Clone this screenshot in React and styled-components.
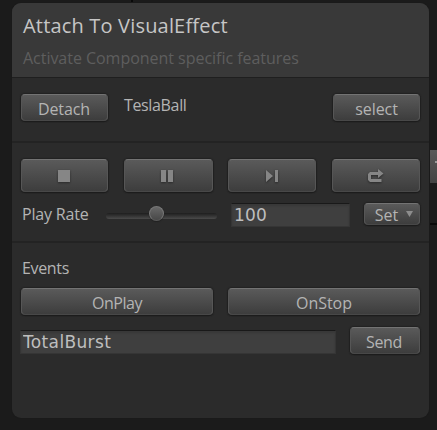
import React from "react";
import styled, { createGlobalStyle } from "styled-components";

const GlobalStyle = createGlobalStyle`
  * { box-sizing: border-box; }
  body {
    margin: 0;
    background: #1b1b1b;
    font-family: "Open Sans", "Noto Sans", sans-serif;
    overflow: hidden;
  }
`;

const Stage = styled.main`
  position: relative;
  width: 437px;
  height: 430px;
  padding: 3px 8px 12px 12px;
  background: #1b1b1b;
  overflow: hidden;
`;

const Panel = styled.section`
  width: 417px;
  height: 415px;
  border-radius: 9px;
  background: #2b2b2b;
  overflow: hidden;
  box-shadow: 0 0 1px #171717;
`;

const Header = styled.header`
  height: 75px;
  padding: 7px 11px 0;
  background: #393939;
  border-bottom: 1px solid #1f1f1f;
`;

const Text = styled.div`
  height: ${(p) => p.$line || 24}px;
  line-height: ${(p) => p.$line || 24}px;
  font-size: ${(p) => p.$size || 16}px;
  letter-spacing: ${(p) => p.$track || 0}px;
  margin-top: ${(p) => p.$top || 0}px;
  color: ${(p) => p.$color || "#b4b4b4"};
  white-space: nowrap;
`;

const TargetName = styled(Text)`
  flex: 1;
  margin-left: 16px;
  margin-top: -1px;
`;

const PlayLabel = styled(Text)`
  width: 68px;
  margin-left: 1px;
  margin-top: -1px;
`;

const EventsLabel = styled(Text)`
  margin-left: 1px;
`;

const Section = styled.div`
  height: ${(p) => p.$height}px;
  padding: ${(p) => p.$top}px 9px 0;
  border-bottom: ${(p) => (p.$last ? "0" : "2px solid #232323")};
`;

const Row = styled.div`
  display: flex;
  align-items: flex-start;
  justify-content: space-between;
  margin-top: ${(p) => p.$top || 0}px;
`;

const Button = styled.button`
  display: flex;
  align-items: center;
  justify-content: center;
  flex: none;
  width: ${(p) => p.$width}px;
  height: ${(p) => p.$height || 27}px;
  margin: 0;
  padding: ${(p) => (p.$icon ? "1px 0 0" : p.$pad || "3px 0 0")};
  border: 1px solid #565656;
  border-top-color: #737373;
  border-bottom-color: #484848;
  border-radius: 4px;
  background: linear-gradient(#5a5a5a, #3d3d3d) padding-box, #565656;
  box-shadow: 0 1px 1px #1c1c1c, 0 0 1px 1px #222;
  color: #b4b4b4;
  font: 16px "Open Sans", "Noto Sans", sans-serif;
  line-height: 22px;
  letter-spacing: ${(p) => p.$track || 0}px;
`;

const Field = styled.input`
  flex: none;
  width: ${(p) => p.$width}px;
  height: 24px;
  margin: 0;
  padding: 0 0 0 ${(p) => p.$pad}px;
  border: 1px solid #353535;
  border-top: 1px solid #191919;
  border-radius: 0;
  background: #3f3f3f;
  box-shadow: inset 0 2px 2px #383838;
  color: #bebebe;
  font: 17px "DejaVu Sans", sans-serif;
  line-height: 22px;
  letter-spacing: ${(p) => p.$track || 0}px;
  outline: none;
`;

const EventField = styled.div`
  margin-left: -1px;
  padding-top: 3px;
`;

const FieldGap = styled.span`
  flex: 1;
`;

const Glyph = styled.svg`
  display: block;
  fill: #868686;
  filter: drop-shadow(0 1px 1px #292929);
  margin-left: ${(p) => p.$shift || 0}px;
`;

const Slider = styled.div`
  display: flex;
  align-items: center;
  width: 111px;
  height: 6px;
  margin: 10px 0 0 16px;
  padding-left: 43px;
  border-radius: 3px;
  background: linear-gradient(#1e1e1e, #343434 50%, #4a4a4a);
`;

const Knob = styled.div`
  flex: none;
  width: 15px;
  height: 15px;
  margin: -6px 0 0 0;
  border: 1px solid #787878;
  border-bottom-color: #5a5a5a;
  border-radius: 50%;
  background: linear-gradient(#686868, #484848);
  box-shadow: 0 1px 1px #202020;
`;

const Caret = styled.svg`
  display: block;
  fill: #8d8d8d;
  margin: 0 0 1px 8px;
`;

const EdgeTab = styled.div`
  position: absolute;
  left: 430px;
  top: 150px;
  width: 7px;
  height: 33px;
  padding: 11px 0 0 5px;
  background: linear-gradient(#595959, #434343);
  &::before {
    content: "";
    display: block;
    height: 2px;
    background: #999;
  }
`;

const EdgeLine = styled.div`
  position: absolute;
  left: ${(p) => p.$x}px;
  top: ${(p) => p.$y}px;
  width: ${(p) => p.$w}px;
  height: 2px;
  background: #090909;
`;

export default function App() {
  return (
    <>
      <GlobalStyle />
      <Stage>
        <Panel>
          <Header>
            <Text $size={20} $line={32} $track={0.18} $color="#c6c6c6">Attach To VisualEffect</Text>
            <Text $top={4} $track={-0.03} $color="#5e5e5e">Activate Component specific features</Text>
          </Header>

          <Section $height={65} $top={16}>
            <Row>
              <Button $width={87} $pad="3px 1px 0 0" $track={-0.1}>Detach</Button>
              <TargetName $track={-0.35}>TeslaBall</TargetName>
              <Button $width={87} $track={-0.05}>select</Button>
            </Row>
          </Section>

          <Section $height={100} $top={16}>
            <Row>
              <Button $width={87} $height={33} $icon aria-label="Stop">
                <Glyph $shift={-1} width="16" height="16"><path d="M2 2h12v12H2z" /></Glyph>
              </Button>
              <Button $width={89} $height={33} $icon aria-label="Pause">
                <Glyph $shift={-2} width="16" height="16"><path d="M2 2h5v12H2zM9 2h5v12H9z" /></Glyph>
              </Button>
              <Button $width={88} $height={33} $icon aria-label="Step">
                <Glyph $shift={-1} width="16" height="16"><path d="M2 2L9 8L2 14zM11 2h3v12h-3z" /></Glyph>
              </Button>
              <Button $width={88} $height={33} $icon aria-label="Restart">
                <Glyph $shift={-2} width="18" height="16"><path d="M12 1L17.5 5.5L12 10V7H5V11H15.5V14H4L2 12V6L4 4H12z" /></Glyph>
              </Button>
            </Row>
            <Row $top={11}>
              <PlayLabel $track={-0.18}>Play Rate</PlayLabel>
              <Slider><Knob /></Slider>
              <FieldGap />
              <Field $width={119} $pad={2} $track={0.2} defaultValue="100" aria-label="Play Rate" />
              <FieldGap />
              <Button $width={56} $height={22} $pad="1px 0 0 4px">
                Set
                <Caret width="7" height="6"><path d="M0 0h7L3.5 6z" /></Caret>
              </Button>
            </Row>
          </Section>

          <Section $height={175} $top={13} $last>
            <EventsLabel $track={-0.35}>Events</EventsLabel>
            <Row $top={8}>
              <Button $width={192} $track={-0.45}>OnPlay</Button>
              <Button $width={192} $track={-0.05}>OnStop</Button>
            </Row>
            <Row $top={12}>
              <EventField>
                <Field $width={316} $pad={2} $track={0.35} defaultValue="TotalBurst" aria-label="Event name" />
              </EventField>
              <Button $width={70} $pad="3px 2px 0 0" $track={-0.3}>Send</Button>
            </Row>
          </Section>
        </Panel>
        <EdgeTab />
        <EdgeLine $x={430} $y={223} $w={7} />
        <EdgeLine $x={131} $y={0} $w={2} />
      </Stage>
    </>
  );
}
